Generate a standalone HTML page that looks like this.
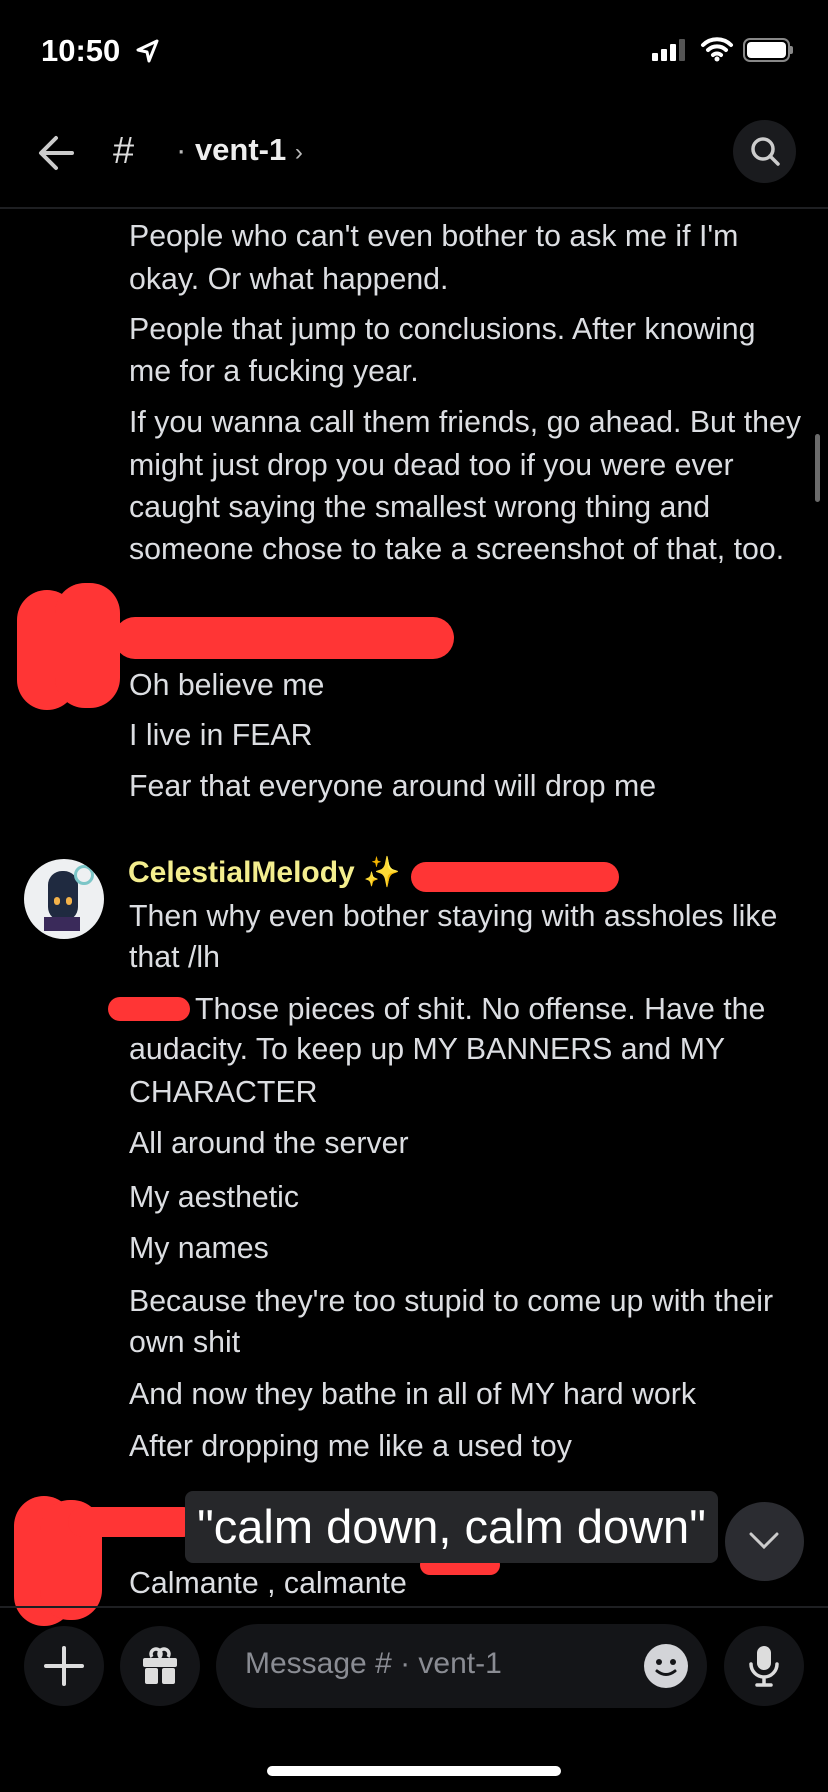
<!DOCTYPE html>
<html><head><meta charset="utf-8"><style>
*{margin:0;padding:0;box-sizing:border-box}
body{width:828px;height:1792px;background:#000;position:relative;overflow:hidden;font-family:"Liberation Sans",sans-serif;color:#dcdee2}
.t{position:absolute;left:129px;font-size:30.3px;line-height:43px;white-space:nowrap}
.r{position:absolute;background:#ff3535;border-radius:30px}
.btn{position:absolute;border-radius:50%;background:#141518}
</style></head><body>
<div style="position:absolute;left:41px;top:33px;font-size:31px;font-weight:bold;color:#fff">10:50</div>
<svg style="position:absolute;left:135px;top:38px" width="26" height="26" viewBox="0 0 26 26"><path d="M22 3L3 12l9 2 2 9z" fill="none" stroke="#fff" stroke-width="3" stroke-linejoin="round"/></svg>
<svg style="position:absolute;left:650px;top:38px" width="40" height="24"><rect x="2" y="15" width="6" height="8" rx="1" fill="#fff"/><rect x="11" y="11" width="6" height="12" rx="1" fill="#fff"/><rect x="20" y="6" width="6" height="17" rx="1" fill="#fff"/><rect x="29" y="1" width="6" height="22" rx="1" fill="#555"/></svg>
<svg style="position:absolute;left:700px;top:36px" width="34" height="26" viewBox="0 0 34 26"><path d="M3 9a20 20 0 0 1 28 0M8 14a13 13 0 0 1 18 0M13 19a6 6 0 0 1 8 0" stroke="#fff" stroke-width="4" fill="none" stroke-linecap="round"/><circle cx="17" cy="23" r="2.5" fill="#fff"/></svg>
<div style="position:absolute;left:743px;top:38px;width:47px;height:24px;border:2px solid #888;border-radius:7px;padding:2px"><div style="background:#fff;width:100%;height:100%;border-radius:4px"></div></div>
<div style="position:absolute;left:790px;top:46px;width:3px;height:8px;background:#888;border-radius:0 2px 2px 0"></div>
<svg style="position:absolute;left:36px;top:134px" width="40" height="38" viewBox="0 0 40 38"><path d="M36 19H6M20 4L5 19l15 15" stroke="#ccc" stroke-width="4" fill="none" stroke-linecap="round" stroke-linejoin="round"/></svg>
<div style="position:absolute;left:113px;top:130px;font-size:38px;color:#ddd">#</div>
<div style="position:absolute;left:176px;top:132px;font-size:31px;font-weight:bold;color:#eee;white-space:nowrap"><span style="font-weight:normal;color:#bbb">·</span> vent-1 <span style="font-weight:normal;font-size:24px;color:#bbb">›</span></div>
<div class="btn" style="left:733px;top:120px;width:63px;height:63px;background:#1a1b1e"></div>
<svg style="position:absolute;left:746px;top:132px" width="40" height="40" viewBox="0 0 40 40"><circle cx="17" cy="17" r="10" stroke="#ccc" stroke-width="3.5" fill="none"/><path d="M24 24l8 8" stroke="#ccc" stroke-width="3.5" stroke-linecap="round"/></svg>
<div style="position:absolute;left:0;top:207px;width:828px;height:2px;background:#1e1f22"></div>
<div style="position:absolute;left:815px;top:434px;width:5px;height:68px;background:#6b6b6b;border-radius:3px"></div>

<div class="t" style="top:215px">People who can't even bother to ask me if I'm</div>
<div class="t" style="top:258px">okay. Or what happend.</div>
<div class="t" style="top:308px">People that jump to conclusions. After knowing</div>
<div class="t" style="top:350px">me for a fucking year.</div>
<div class="t" style="top:401px">If you wanna call them friends, go ahead. But they</div>
<div class="t" style="top:444px">might just drop you dead too if you were ever</div>
<div class="t" style="top:486px">caught saying the smallest wrong thing and</div>
<div class="t" style="top:528px">someone chose to take a screenshot of that, too.</div>

<div class="r" style="left:114px;top:617px;width:340px;height:42px;border-radius:22px"></div>
<div class="r" style="left:17px;top:590px;width:60px;height:120px;border-radius:30px"></div>
<div class="r" style="left:55px;top:583px;width:65px;height:125px;border-radius:30px"></div>

<div class="t" style="top:664px">Oh believe me</div>
<div class="t" style="top:714px">I live in FEAR</div>
<div class="t" style="top:765px">Fear that everyone around will drop me</div>

<div style="position:absolute;left:24px;top:859px;width:80px;height:80px;border-radius:50%;background:#eef0f2;overflow:hidden">
<div style="position:absolute;left:24px;top:12px;width:30px;height:50px;background:#1f2a40;border-radius:14px"></div>
<div style="position:absolute;left:30px;top:38px;width:6px;height:8px;background:#f3b24a;border-radius:3px"></div>
<div style="position:absolute;left:42px;top:38px;width:6px;height:8px;background:#f3b24a;border-radius:3px"></div>
<div style="position:absolute;left:50px;top:6px;width:20px;height:20px;border:3px solid #7cc6c8;border-radius:50%"></div>
<div style="position:absolute;left:20px;top:58px;width:36px;height:14px;background:#3a2a5a"></div>
</div>
<div style="position:absolute;left:128px;top:855px;font-size:30px;font-weight:bold;color:#f4ee8e;white-space:nowrap">CelestialMelody <span style="color:#f5d94a;font-weight:normal">✨</span></div>
<div class="r" style="left:411px;top:862px;width:208px;height:30px;border-radius:16px"></div>
<div class="t" style="top:895px">Then why even bother staying with assholes like</div>
<div class="t" style="top:936px">that /lh</div>
<div class="t" style="top:988px;left:195px">Those pieces of shit. No offense. Have the</div>
<div class="r" style="left:108px;top:997px;width:82px;height:24px;border-radius:12px"></div>
<div class="t" style="top:1028px">audacity. To keep up MY BANNERS and MY</div>
<div class="t" style="top:1071px">CHARACTER</div>
<div class="t" style="top:1122px">All around the server</div>
<div class="t" style="top:1176px">My aesthetic</div>
<div class="t" style="top:1227px">My names</div>
<div class="t" style="top:1280px">Because they're too stupid to come up with their</div>
<div class="t" style="top:1321px">own shit</div>
<div class="t" style="top:1373px">And now they bathe in all of MY hard work</div>
<div class="t" style="top:1425px">After dropping me like a used toy</div>

<div class="r" style="left:14px;top:1496px;width:60px;height:130px"></div>
<div class="r" style="left:40px;top:1500px;width:62px;height:120px"></div>
<div class="r" style="left:68px;top:1507px;width:130px;height:30px;border-radius:15px"></div>
<div class="r" style="left:420px;top:1555px;width:80px;height:20px;border-radius:10px"></div>
<div style="position:absolute;left:185px;top:1491px;width:533px;height:72px;background:#26272a;border-radius:8px;color:#fff;font-size:47px;line-height:72px;text-align:center;white-space:nowrap;overflow:hidden">"calm down, calm down"</div>
<div class="btn" style="left:725px;top:1502px;width:79px;height:79px;background:#2b2c31"></div>
<svg style="position:absolute;left:748px;top:1530px" width="32" height="22"><path d="M3 4l13 13L29 4" stroke="#ccc" stroke-width="3" fill="none" stroke-linecap="round"/></svg>
<div class="t" style="top:1562px">Calmante , calmante</div>
<div style="position:absolute;left:0;top:1606px;width:828px;height:2px;background:#1e1f22"></div>

<div class="btn" style="left:24px;top:1626px;width:80px;height:80px"></div>
<svg style="position:absolute;left:44px;top:1646px" width="40" height="40"><path d="M20 2v36M2 20h36" stroke="#ddd" stroke-width="4" stroke-linecap="round"/></svg>
<div class="btn" style="left:120px;top:1626px;width:80px;height:80px"></div>
<svg style="position:absolute;left:140px;top:1646px" width="40" height="40" viewBox="0 0 40 40"><path d="M12 11a5 5 0 1 1 8 0a5 5 0 1 1 8 0" stroke="#ddd" stroke-width="3.5" fill="none"/><rect x="3" y="12" width="34" height="9" rx="2" fill="#ddd"/><rect x="5" y="22" width="13" height="16" rx="2" fill="#ddd"/><rect x="22" y="22" width="13" height="16" rx="2" fill="#ddd"/></svg>
<div style="position:absolute;left:216px;top:1624px;width:491px;height:84px;border-radius:42px;background:#141518"></div>
<div style="position:absolute;left:245px;top:1647px;font-size:30px;color:#8a8c93;white-space:nowrap">Message # · vent-1</div>
<div style="position:absolute;left:644px;top:1644px;width:44px;height:44px;border-radius:50%;background:#d3d4d8"></div>
<svg style="position:absolute;left:644px;top:1644px" width="44" height="44"><circle cx="15" cy="18" r="3" fill="#141518"/><circle cx="29" cy="18" r="3" fill="#141518"/><path d="M13 27q9 7 18 0" stroke="#141518" stroke-width="3" fill="none" stroke-linecap="round"/></svg>
<div class="btn" style="left:724px;top:1626px;width:80px;height:80px"></div>
<svg style="position:absolute;left:744px;top:1644px" width="40" height="44" viewBox="0 0 40 44"><rect x="13" y="2" width="14" height="24" rx="7" fill="#ddd"/><path d="M7 20a13 13 0 0 0 26 0M20 33v7M13 41h14" stroke="#ddd" stroke-width="3.5" fill="none" stroke-linecap="round"/></svg>
<div style="position:absolute;left:267px;top:1766px;width:294px;height:10px;border-radius:5px;background:#fff"></div>
</body></html>
